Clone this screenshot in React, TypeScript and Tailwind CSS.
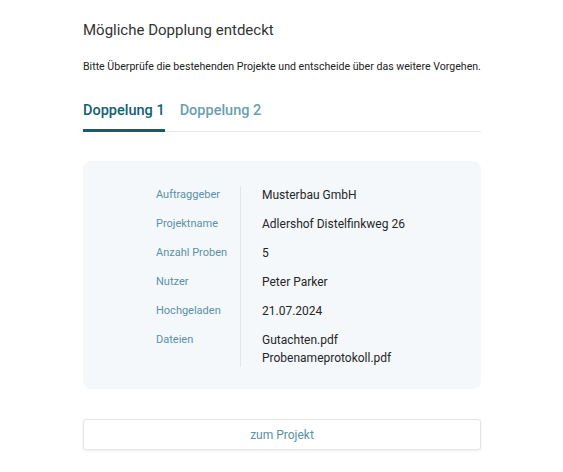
const rows: { label: string; values: string[] }[] = [
  { label: "Auftraggeber", values: ["Musterbau GmbH"] },
  { label: "Projektname", values: ["Adlershof Distelfinkweg 26"] },
  { label: "Anzahl Proben", values: ["5"] },
  { label: "Nutzer", values: ["Peter Parker"] },
  { label: "Hochgeladen", values: ["21.07.2024"] },
  { label: "Dateien", values: ["Gutachten.pdf", "Probenameprotokoll.pdf"] },
];

const App = () => {
  return (
    <div className="min-h-screen bg-white font-['Roboto',sans-serif]">
      <div className="w-[398px] ml-[83px] pt-[19px]">
        <h2 className="text-[15px] leading-[22px] text-[#333333]">Mögliche Dopplung entdeckt</h2>
        <p className="mt-[18px] whitespace-nowrap text-[10.6px] leading-[16px] text-[#222222]">
          Bitte Überprüfe die bestehenden Projekte und entscheide über das weitere Vorgehen.
        </p>

        <div className="mt-[26px] flex gap-[15px] border-b border-[#e6e9ec]">
          <button className="pb-[8px] border-b-[3px] border-[#0f5f72] -mb-px text-[14.5px] leading-[20px] font-medium text-[#0f5f72]">
            Doppelung 1
          </button>
          <button className="pb-[8px] border-b-[3px] border-transparent -mb-px text-[14.5px] leading-[20px] font-medium text-[#6a9fb0]">
            Doppelung 2
          </button>
        </div>

        <section className="mt-[29px] rounded-lg bg-[#f4f8fb] pt-[25px] pb-[22px] pl-[73px]">
          <div className="flex">
            <div className="w-[84px] flex flex-col gap-[11px]">
              {rows.map((r) => (
                <p
                  key={r.label}
                  className="text-[11px] leading-[18px] text-[#5b91a5]"
                  style={{ height: r.values.length * 18 }}
                >
                  {r.label}
                </p>
              ))}
            </div>
            <div className="border-l border-[#e2e6ea] pl-[21px] flex flex-col gap-[11px]">
              {rows.map((r) => (
                <div key={r.label}>
                  {r.values.map((v) => (
                    <p key={v} className="text-[12px] leading-[18px] text-[#262626]">
                      {v}
                    </p>
                  ))}
                </div>
              ))}
            </div>
          </div>
        </section>

        <button className="mt-[30px] w-full h-[31px] rounded-[3px] border border-[#e4e6e8] bg-white shadow-[0_1px_3px_rgba(0,0,0,0.08)] text-[12px] text-[#5b8fa4]">
          zum Projekt
        </button>
      </div>
    </div>
  );
};

export default App;
